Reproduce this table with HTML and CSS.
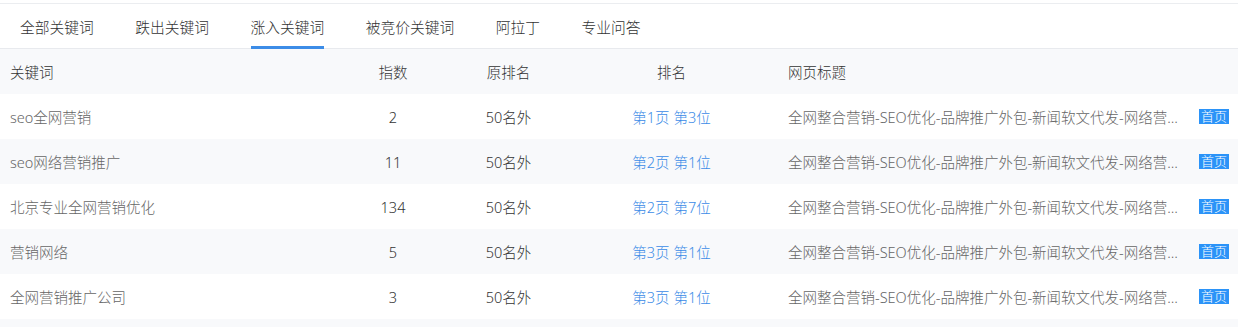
FILE: index.html
```html
<!DOCTYPE html>
<html lang="zh-CN">
<head>
<meta charset="utf-8">
<title>涨入关键词</title>
<link rel="stylesheet" href="styles.css">
</head>
<body>
<div class="panel">
  <div class="tabs">
    <div class="tab">全部关键词</div>
    <div class="tab">跌出关键词</div>
    <div class="tab active">涨入关键词</div>
    <div class="tab">被竞价关键词</div>
    <div class="tab">阿拉丁</div>
    <div class="tab">专业问答</div>
  </div>
  <table class="grid">
    <colgroup>
      <col class="c-kw"><col class="c-idx"><col class="c-old"><col class="c-rank"><col class="c-title">
    </colgroup>
    <thead>
      <tr>
        <th class="left">关键词</th>
        <th>指数</th>
        <th>原排名</th>
        <th>排名</th>
        <th class="left">网页标题</th>
      </tr>
    </thead>
    <tbody>
      <tr>
        <td class="kw">seo全网营销</td><td class="num">2</td><td class="num">50名外</td><td class="rank">第1页 第3位</td>
        <td class="title-cell"><div class="title-wrap"><span class="title">全网整合营销-SEO优化-品牌推广外包-新闻软文代发-网络营销推广公司</span><span class="badge">首页</span></div></td>
      </tr>
      <tr>
        <td class="kw">seo网络营销推广</td><td class="num">11</td><td class="num">50名外</td><td class="rank">第2页 第1位</td>
        <td class="title-cell"><div class="title-wrap"><span class="title">全网整合营销-SEO优化-品牌推广外包-新闻软文代发-网络营销推广公司</span><span class="badge">首页</span></div></td>
      </tr>
      <tr>
        <td class="kw">北京专业全网营销优化</td><td class="num">134</td><td class="num">50名外</td><td class="rank">第2页 第7位</td>
        <td class="title-cell"><div class="title-wrap"><span class="title">全网整合营销-SEO优化-品牌推广外包-新闻软文代发-网络营销推广公司</span><span class="badge">首页</span></div></td>
      </tr>
      <tr>
        <td class="kw">营销网络</td><td class="num">5</td><td class="num">50名外</td><td class="rank">第3页 第1位</td>
        <td class="title-cell"><div class="title-wrap"><span class="title">全网整合营销-SEO优化-品牌推广外包-新闻软文代发-网络营销推广公司</span><span class="badge">首页</span></div></td>
      </tr>
      <tr>
        <td class="kw">全网营销推广公司</td><td class="num">3</td><td class="num">50名外</td><td class="rank">第3页 第1位</td>
        <td class="title-cell"><div class="title-wrap"><span class="title">全网整合营销-SEO优化-品牌推广外包-新闻软文代发-网络营销推广公司</span><span class="badge">首页</span></div></td>
      </tr>
      <tr class="spacer"><td colspan="5"></td></tr>
    </tbody>
  </table>
</div>
</body>
</html>
```

FILE: styles.css
```css
html, body {
  margin: 0;
  padding: 0;
  background: #fff;
}
body {
  font-family: "Noto Sans", "Noto Sans CJK SC", sans-serif;
  font-weight: 300;
  color: #333;
  overflow: hidden;
}
.panel {
  padding-top: 3px;
}
.tabs {
  display: flex;
  height: 44px;
  border-top: 1px solid #ebedf0;
  border-bottom: 1px solid #e8eaee;
}
.tab {
  margin: 0 20.75px;
  font-size: 14.75px;
  line-height: 46px;
  height: 44px;
  color: #333;
  white-space: nowrap;
  box-sizing: border-box;
}
.tab:first-child {
  margin-left: 20px;
}
.tab.active {
  border-bottom: 3px solid #3c8ce7;
  height: 45px;
  margin-bottom: -1px;
}
.grid {
  width: 100%;
  border-collapse: collapse;
  table-layout: fixed;
  font-size: 14.5px;
}
.c-kw { width: 334px; }
.c-idx { width: 118px; }
.c-old { width: 113px; }
.c-rank { width: 213px; }
.c-title { width: auto; }
.grid th, .grid td {
  height: 45px;
  padding: 0 10px;
  box-sizing: border-box;
  text-align: center;
  vertical-align: middle;
  font-weight: 300;
  white-space: nowrap;
}
.grid th {
  color: #333;
  background: #f8f9fb;
}
.grid th.left, .grid td.kw, .grid td.title-cell {
  text-align: left;
}
.grid tbody tr:nth-child(even) td {
  background: #f8f9fb;
}
.kw {
  color: #666;
}
.num {
  color: #333;
}
.rank {
  color: #3c8ce7;
}
.title-cell {
  padding-right: 9px !important;
}
.title-wrap {
  display: flex;
  align-items: center;
}
.title {
  flex: 1;
  min-width: 0;
  overflow: hidden;
  text-overflow: ellipsis;
  white-space: nowrap;
  color: #666;
}
.badge {
  flex: none;
  margin-left: 8px;
  background: #2b93f8;
  color: #fff;
  font-size: 13px;
  line-height: 15px;
  height: 15px;
  padding: 0 2px;
}
.grid tr.spacer td {
  height: 20px;
}
```
